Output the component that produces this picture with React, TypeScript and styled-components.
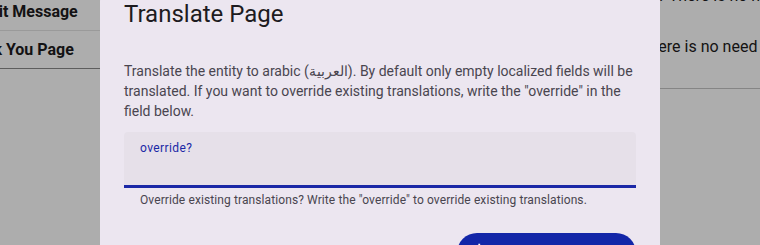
import React from 'react';
import styled, { createGlobalStyle } from 'styled-components';
import { MdTranslate } from 'react-icons/md';

const GlobalStyle = createGlobalStyle`
    html, body {
        margin: 0;
        padding: 0;
        background: #ffffff;
        font-family: Roboto, 'Noto Sans', sans-serif;
    }
`;

const Page = styled.div`
    position: relative;
    display: flex;
    width: 760px;
    height: 245px;
    overflow: hidden;
    background: #ffffff;
`;

const Sidebar = styled.nav`
    flex: 0 0 170px;
    margin-left: -59px;
    margin-top: -7px;
    align-self: flex-start;
    border-bottom: 1px solid #8a8a8a;
`;

const NavItem = styled.div`
    height: 37px;
    display: flex;
    align-items: center;
    padding: 0 16px;
    font-size: 16px;
    font-weight: 700;
    color: #1d1b20;
    white-space: nowrap;
    & + & {
        border-top: 1px solid #e3e3e3;
    }
`;

const Main = styled.main`
    flex: 1;
    padding-left: 489px;
    margin-top: -16px;
    align-self: flex-start;
    border-bottom: 1px solid #c4c4c4;
    padding-bottom: 29px;
`;

const Line = styled.p`
    margin: 0 0 27px;
    font-size: 16px;
    line-height: 24px;
    color: #1d1b20;
    white-space: nowrap;
    &:last-child {
        margin-bottom: 0;
    }
`;

const Scrim = styled.div`
    position: absolute;
    inset: 0;
    background: rgba(0, 0, 0, 0.32);
`;

const Dialog = styled.div`
    position: absolute;
    left: 100px;
    top: -26px;
    width: 560px;
    box-sizing: border-box;
    padding: 24px;
    background: #ece6f0;
    border-radius: 28px;
    display: flex;
    flex-direction: column;
`;

const Title = styled.h2`
    margin: 0;
    font-size: 24px;
    line-height: 32px;
    font-weight: 400;
    color: #1d1b20;
`;

const Body = styled.p`
    margin: 31px 0 0;
    font-size: 14px;
    line-height: 20px;
    color: #49454f;
`;

const Field = styled.div`
    margin-top: 11px;
    height: 56px;
    box-sizing: border-box;
    padding: 8px 16px 0;
    background: #e6e0e9;
    border-radius: 4px 4px 0 0;
    border-bottom: 3px solid #1b28a6;
    display: flex;
    flex-direction: column;
`;

const Label = styled.label`
    font-size: 12px;
    line-height: 16px;
    letter-spacing: 0.4px;
    color: #1b28a6;
`;

const Input = styled.input`
    border: 0;
    outline: 0;
    background: transparent;
    padding: 0;
    font-family: inherit;
    font-size: 16px;
    line-height: 24px;
    color: #1d1b20;
`;

const Support = styled.div`
    margin-top: 4px;
    padding: 0 16px;
    font-size: 12px;
    line-height: 16px;
    letter-spacing: 0.1px;
    color: #49454f;
`;

const Actions = styled.div`
    margin-top: 25px;
    display: flex;
    justify-content: flex-end;
`;

const Button = styled.button`
    width: 179px;
    height: 40px;
    border: 0;
    border-radius: 20px;
    background: #1326a8;
    color: #ffffff;
    display: flex;
    align-items: center;
    gap: 8px;
    padding: 0 24px 0 14px;
    font-family: inherit;
    font-size: 14px;
    font-weight: 500;
    letter-spacing: 0.1px;
    cursor: pointer;
`;

export default function App() {
    return (
        <>
            <GlobalStyle />
            <Page>
                <Sidebar>
                    <NavItem>Submit Message</NavItem>
                    <NavItem>Thank You Page</NavItem>
                </Sidebar>
                <Main>
                    <Line>Is it free? There is no need to pay for it.</Line>
                    <Line>Sure. There is no need to translate every field.</Line>
                </Main>
                <Scrim />
                <Dialog role="dialog">
                    <Title>Translate Page</Title>
                    <Body>
                        Translate the entity to arabic (العربية). By default only empty localized fields will be
                        translated. If you want to override existing translations, write the "override" in the
                        field below.
                    </Body>
                    <Field>
                        <Label htmlFor="override">override?</Label>
                        <Input id="override" />
                    </Field>
                    <Support>Override existing translations? Write the "override" to override existing translations.</Support>
                    <Actions>
                        <Button>
                            <MdTranslate size={22} />
                            Translate
                        </Button>
                    </Actions>
                </Dialog>
            </Page>
        </>
    );
}
